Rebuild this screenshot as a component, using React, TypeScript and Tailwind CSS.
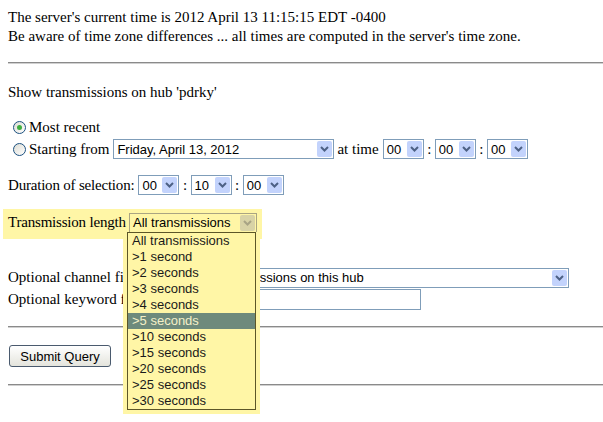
const serif = "font-['Liberation_Serif','Times_New_Roman',serif]"
const sans = "font-['Liberation_Sans',Arial,sans-serif]"

function Chevron({ color }: { color: string }) {
  return (
    <svg width="9" height="6" viewBox="0 0 9 6">
      <path d="M1 1 L4.5 4.5 L8 1" fill="none" stroke={color} strokeWidth="2" />
    </svg>
  )
}

function Select({ value, w, yellow = false }: { value: string; w?: string; yellow?: boolean }) {
  return (
    <div
      className={`flex h-[20px] items-center border ${sans} text-[13px] ${
        yellow ? "border-[#aaa582] bg-[#fff6a6]" : "border-[#7f9db9] bg-white"
      } ${w ?? ""}`}
    >
      <span className="flex-1 truncate pl-[3px] text-black">{value}</span>
      <span
        className={`mr-px flex h-[16px] w-[15px] items-center justify-center rounded-[2px] ${
          yellow ? "bg-[#d8d3a6]" : "bg-[#c3d3fc]"
        }`}
      >
        <Chevron color={yellow ? "#a8a485" : "#4d6185"} />
      </span>
    </div>
  )
}

function Rule() {
  return <div className="h-[2px] border-t border-t-[#8a8a8a] border-b border-b-[#d0d0d0]" />
}

function Radio({ checked }: { checked?: boolean }) {
  return (
    <span className="flex h-[13px] w-[13px] shrink-0 items-center justify-center rounded-full border border-[#1c5180] bg-gradient-to-br from-[#dcdcd4] to-white">
      {checked && <span className="h-[5px] w-[5px] rounded-full bg-[#3fae3f]" />}
    </span>
  )
}

const lengths = [
  "All transmissions",
  ">1 second",
  ">2 seconds",
  ">3 seconds",
  ">4 seconds",
  ">5 seconds",
  ">10 seconds",
  ">15 seconds",
  ">20 seconds",
  ">25 seconds",
  ">30 seconds",
]

export default function App() {
  return (
    <div className={`relative h-[422px] w-[603px] overflow-hidden bg-white pl-2 pt-2 text-[15px] leading-[19px] text-black ${serif}`}>
      <div>The server's current time is 2012 April 13 11:15:15 EDT -0400</div>
      <div>Be aware of time zone differences ... all times are computed in the server's time zone.</div>

      <div className="mt-4">
        <Rule />
      </div>

      <div className="mt-[19px]">Show transmissions on hub 'pdrky'</div>

      {/* time window */}
      <div className="mt-[15px] flex h-[21px] items-center pl-[5px]">
        <Radio checked />
        <span className="ml-[3px]">Most recent</span>
      </div>
      <div className="flex h-[22px] items-center gap-[4px] whitespace-nowrap pl-[5px]">
        <Radio />
        <span className="-ml-px">Starting from</span>
        <Select value="Friday, April 13, 2012" w="w-[221px]" />
        <span className="-ml-px">at time</span>
        <Select value="00" w="w-[41px]" />
        <span className="-mx-[0.5px]">:</span>
        <Select value="00" w="w-[41px]" />
        <span className="-mx-[0.5px]">:</span>
        <Select value="00" w="w-[41px]" />
      </div>

      <div className="mt-[14px] flex h-[22px] items-center gap-[4px] whitespace-nowrap">
        <span className="tracking-[-0.2px]">Duration of selection:</span>
        <Select value="00" w="w-[41px]" />
        <span className="-mx-[0.5px]">:</span>
        <Select value="10" w="w-[41px]" />
        <span className="-mx-[0.5px]">:</span>
        <Select value="00" w="w-[41px]" />
      </div>

      {/* highlighted length picker */}
      <div className="relative mt-[13px] -ml-[5px] w-[259px] bg-[#fff6a6] pb-[7px] pl-[5px] pt-[4px]">
        <div className="flex h-[19px] items-center gap-[3px] whitespace-nowrap">
          <span className="w-[118px] tracking-[-0.2px]">Transmission length</span>
          <Select value="All transmissions" w="w-[128px] h-[19px]" yellow />
        </div>
        <div className="absolute left-[120px] top-[23px] z-10 bg-[#fff6a6] px-[4px] pb-[4px]">
          <ul className={`w-[129px] border border-[#5c5628] bg-[#fff6a6] ${sans} text-[13px] leading-[16px]`}>
            {lengths.map((l) => (
              <li
                key={l}
                className={`h-[16px] pl-[4px] ${
                  l === ">5 seconds" ? "bg-[#6e8a7c] text-[#f4f0c8]" : "text-[#1a1a1a]"
                }`}
              >
                {l}
              </li>
            ))}
          </ul>
        </div>
      </div>

      <div className="mt-[28px] flex h-[21px] w-[561px] items-center gap-[4px]">
        <span className="w-[183px] whitespace-nowrap">Optional channel filter:</span>
        <Select value="All transmissions on this hub" w="flex-1" />
      </div>
      <div className="flex h-[22px] w-[413px] items-center gap-[4px]">
        <span className="w-[183px] whitespace-nowrap">Optional keyword filter:</span>
        <div className="h-[21px] flex-1 border border-[#7f9db9] bg-white" />
      </div>

      <div className="mt-[16px]">
        <Rule />
      </div>

      <div className="mt-[17px]">
        <button
          className={`ml-px h-[22px] w-[102px] rounded-[3px] border border-[#4a5a6e] bg-gradient-to-b from-white to-[#e4e4dc] ${sans} text-[13px] text-black`}
        >
          Submit Query
        </button>
      </div>

      <div className="mt-[17px]">
        <Rule />
      </div>
    </div>
  )
}
